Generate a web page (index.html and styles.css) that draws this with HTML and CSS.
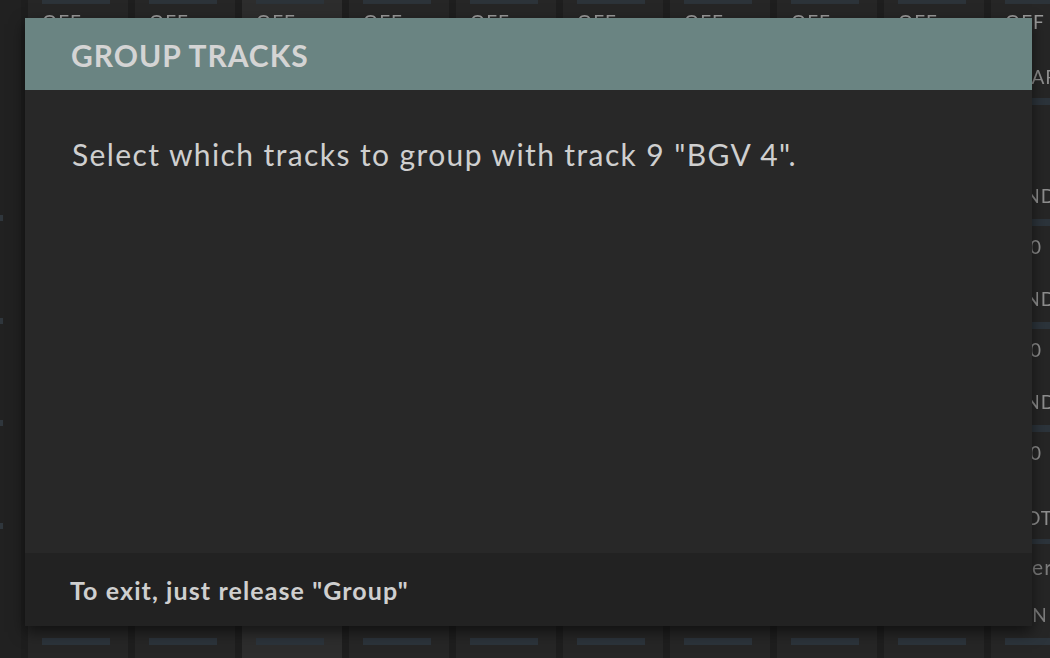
FILE: index.html
```html
<!DOCTYPE html>
<html>
<head>
<meta charset="utf-8">
<link rel="stylesheet" href="styles.css">
</head>
<body>
<div class="mixer">
  <div class="edge">
    <span class="edge-mark m1"></span>
    <span class="edge-mark m2"></span>
    <span class="edge-mark m3"></span>
    <span class="edge-mark m4"></span>
  </div>
  <div class="strip"><div class="cap"></div><div class="off">OFF</div><div class="grow"></div><div class="foot"></div></div>
  <div class="strip"><div class="cap"></div><div class="off">OFF</div><div class="grow"></div><div class="foot"></div></div>
  <div class="strip sel"><div class="cap"></div><div class="off">OFF</div><div class="grow"></div><div class="foot"></div></div>
  <div class="strip"><div class="cap"></div><div class="off">OFF</div><div class="grow"></div><div class="foot"></div></div>
  <div class="strip"><div class="cap"></div><div class="off">OFF</div><div class="grow"></div><div class="foot"></div></div>
  <div class="strip"><div class="cap"></div><div class="off">OFF</div><div class="grow"></div><div class="foot"></div></div>
  <div class="strip"><div class="cap"></div><div class="off">OFF</div><div class="grow"></div><div class="foot"></div></div>
  <div class="strip"><div class="cap"></div><div class="off">OFF</div><div class="grow"></div><div class="foot"></div></div>
  <div class="strip"><div class="cap"></div><div class="off">OFF</div><div class="grow"></div><div class="foot"></div></div>
  <div class="strip last">
    <div class="cap"></div>
    <div class="off">OFF</div>
    <div class="lbl r-ar">CLEAR</div>
    <div class="bar"></div>
    <div class="lbl r-nd">SEND</div>
    <div class="bar"></div>
    <div class="lbl r-0">0</div>
    <div class="lbl r-nd2">SEND</div>
    <div class="bar"></div>
    <div class="lbl r-0">0</div>
    <div class="lbl r-nd2">SEND</div>
    <div class="bar"></div>
    <div class="lbl r-0">0</div>
    <div class="lbl r-ot">PIVOT</div>
    <div class="bar thin"></div>
    <div class="lbl r-er">Percussion</div>
    <div class="lbl r-n">ON</div>
    <div class="grow"></div>
    <div class="foot"></div>
  </div>
</div>

<div class="modal">
  <div class="modal-head">GROUP TRACKS</div>
  <div class="modal-body">Select which tracks to group with track 9 "BGV 4".</div>
  <div class="modal-foot">To exit, just release "Group"</div>
</div>
</body>
</html>
```

FILE: styles.css
```css
html, body {
  margin: 0;
  padding: 0;
}
body {
  width: 1050px;
  height: 658px;
  overflow: hidden;
  background: #1e1e1e;
  font-family: Lato, "Noto Sans", sans-serif;
  position: relative;
}
.mixer {
  display: flex;
  gap: 7px;
  height: 658px;
  filter: blur(0.6px);
}
.edge {
  width: 21px;
  flex: none;
  background: #212121;
  position: relative;
}
.edge-mark {
  position: absolute;
  left: 0;
  width: 3px;
  height: 6px;
  background: #2f363c;
}
.m1 { top: 215px; }
.m2 { top: 318px; }
.m3 { top: 420px; }
.m4 { top: 523px; }
.strip {
  width: 100px;
  flex: none;
  background: #262626;
  display: flex;
  flex-direction: column;
  padding-left: 14px;
  box-sizing: border-box;
}
.strip.sel {
  background: #2d2d2d;
}
.cap {
  width: 68px;
  height: 4px;
  background: #2c3339;
  flex: none;
}
.off {
  margin-top: 8px;
  font-size: 19px;
  color: #9b9b9b;
  letter-spacing: 1px;
  line-height: 20px;
}
.grow {
  flex: 1;
}
.foot {
  width: 68px;
  height: 7px;
  background: #2c343b;
  margin-bottom: 13px;
  flex: none;
}
.strip.last {
  width: 90px;
}
.lbl {
  font-size: 19px;
  color: #8f8f8f;
  letter-spacing: 1px;
  line-height: 18px;
  white-space: nowrap;
}
.bar {
  height: 7px;
  width: 90px;
  margin-left: -14px;
  background: #2c343b;
}
.bar.thin {
  height: 5px;
}
.r-ar { margin-top: 36px; margin-left: -10px; }
.lbl.r-ar + .bar { margin-top: 12px; }
.r-nd { margin-top: 82px; margin-left: -3px; }
.r-nd + .bar, .r-nd2 + .bar { margin-top: 14px; }
.r-nd2 { margin-top: 34px; margin-left: -3px; }
.r-0 { margin-top: 12px; margin-left: 25px; }
.r-ot { margin-top: 47px; margin-left: -12px; }
.r-ot + .bar { margin-top: 12px; }
.r-er { margin-top: 14px; margin-left: 14px; color: #7d7d7d; font-size: 21px; }
.r-n { margin-top: 30px; margin-left: 11px; color: #7d7d7d; }

.modal {
  position: absolute;
  z-index: 2;
  left: 25px;
  top: 18px;
  width: 1007px;
  height: 608px;
  display: flex;
  flex-direction: column;
  box-shadow: 0 6px 14px rgba(0, 0, 0, 0.55);
}
.modal-head {
  height: 72px;
  flex: none;
  background: #6a8482;
  color: #d4d4d4;
  font-weight: 700;
  font-size: 30px;
  letter-spacing: 1px;
  padding-left: 46px;
  display: flex;
  align-items: center;
  box-sizing: border-box;
  padding-top: 2px;
}
.modal-body {
  flex: 1;
  background: #282828;
  color: #cfcfcf;
  font-size: 30px;
  letter-spacing: 1.4px;
  padding: 47px 0 0 47px;
  box-sizing: border-box;
  line-height: 34px;
}
.modal-foot {
  height: 73px;
  flex: none;
  background: #222222;
  color: #cfcfcf;
  font-weight: 700;
  font-size: 25px;
  letter-spacing: 1.1px;
  padding-left: 45px;
  display: flex;
  align-items: center;
  box-sizing: border-box;
  padding-top: 1px;
}
```
